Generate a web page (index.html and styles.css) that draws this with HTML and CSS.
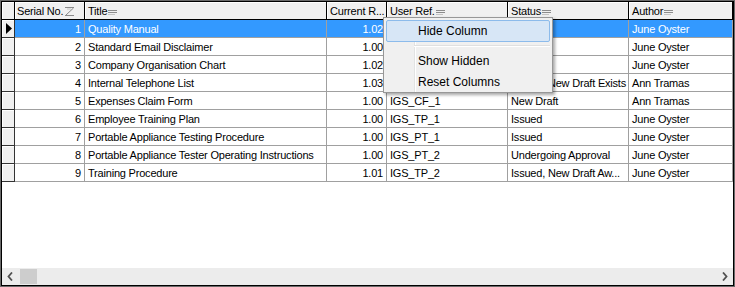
FILE: index.html
```html
<!DOCTYPE html>
<html>
<head>
<meta charset="utf-8">
<link rel="stylesheet" href="styles.css">
</head>
<body>
<div class="frame">
  <table class="grid">
    <colgroup>
      <col class="c-rh"><col class="c-sn"><col class="c-title"><col class="c-rev"><col class="c-ref"><col class="c-status"><col class="c-author">
    </colgroup>
    <thead>
      <tr>
        <th class="corner"></th>
        <th>Serial No.<svg class="ico" width="11" height="9" viewBox="0 0 11 9"><path d="M1 0.5H10M9.5 1L2 8M1 8.5H10" stroke="#8a8a8a" stroke-width="1" fill="none"/><path d="M3 2H7" stroke="#c8c8c8" stroke-width="1"/></svg></th>
        <th>Title<svg class="ico" width="10" height="7" viewBox="0 0 10 7"><path d="M0 1.5H9M0 3.5H9" stroke="#8c8c8c"/><path d="M0 5.5H7" stroke="#c4c4c4"/></svg></th>
        <th>Current R...</th>
        <th>User Ref.<svg class="ico" width="10" height="7" viewBox="0 0 10 7"><path d="M0 1.5H9M0 3.5H9" stroke="#8c8c8c"/><path d="M0 5.5H7" stroke="#c4c4c4"/></svg></th>
        <th>Status<svg class="ico" width="10" height="7" viewBox="0 0 10 7"><path d="M0 1.5H9M0 3.5H9" stroke="#8c8c8c"/><path d="M0 5.5H7" stroke="#c4c4c4"/></svg></th>
        <th>Author<svg class="ico" width="10" height="7" viewBox="0 0 10 7"><path d="M0 1.5H9M0 3.5H9" stroke="#8c8c8c"/><path d="M0 5.5H7" stroke="#c4c4c4"/></svg></th>
      </tr>
    </thead>
    <tbody>
      <tr class="sel">
        <td class="rh"><svg width="7" height="11" viewBox="0 0 7 11"><path d="M0 0L6 5.5L0 11Z" fill="#000"/></svg></td>
        <td class="num">1</td><td>Quality Manual</td><td class="num">1.02</td><td>IGS_QM_1</td><td>Issued</td><td>June Oyster</td>
      </tr>
      <tr>
        <td class="rh"></td>
        <td class="num">2</td><td>Standard Email Disclaimer</td><td class="num">1.00</td><td>IGS_SE_1</td><td>Issued</td><td>June Oyster</td>
      </tr>
      <tr>
        <td class="rh"></td>
        <td class="num">3</td><td>Company Organisation Chart</td><td class="num">1.02</td><td>IGS_CO_1</td><td>Issued</td><td>June Oyster</td>
      </tr>
      <tr>
        <td class="rh"></td>
        <td class="num">4</td><td>Internal Telephone List</td><td class="num">1.03</td><td>IGS_IT_1</td><td>Issued, New Draft Exists</td><td>Ann Tramas</td>
      </tr>
      <tr>
        <td class="rh"></td>
        <td class="num">5</td><td>Expenses Claim Form</td><td class="num">1.00</td><td>IGS_CF_1</td><td>New Draft</td><td>Ann Tramas</td>
      </tr>
      <tr>
        <td class="rh"></td>
        <td class="num">6</td><td>Employee Training Plan</td><td class="num">1.00</td><td>IGS_TP_1</td><td>Issued</td><td>June Oyster</td>
      </tr>
      <tr>
        <td class="rh"></td>
        <td class="num">7</td><td>Portable Appliance Testing Procedure</td><td class="num">1.00</td><td>IGS_PT_1</td><td>Issued</td><td>June Oyster</td>
      </tr>
      <tr>
        <td class="rh"></td>
        <td class="num">8</td><td>Portable Appliance Tester Operating Instructions</td><td class="num">1.00</td><td>IGS_PT_2</td><td>Undergoing Approval</td><td>June Oyster</td>
      </tr>
      <tr>
        <td class="rh"></td>
        <td class="num">9</td><td>Training Procedure</td><td class="num">1.01</td><td>IGS_TP_2</td><td>Issued, New Draft Aw...</td><td>June Oyster</td>
      </tr>
    </tbody>
  </table>
  <div class="filler"></div>
  <div class="hscroll">
    <div class="sbtn"><svg width="7" height="9" viewBox="0 0 7 9"><path d="M5 0.5L1.5 4.5L5 8.5" stroke="#505050" stroke-width="1.8" fill="none"/></svg></div>
    <div class="thumb"></div>
    <div class="track"></div>
    <div class="sbtn"><svg width="7" height="9" viewBox="0 0 7 9"><path d="M2 0.5L5.5 4.5L2 8.5" stroke="#505050" stroke-width="1.8" fill="none"/></svg></div>
  </div>

  <div class="menu">
    <div class="mitem hot">Hide Column</div>
    <div class="msep"></div>
    <div class="mitem">Show Hidden</div>
    <div class="mitem">Reset Columns</div>
  </div>
</div>
</body>
</html>
```

FILE: styles.css
```css
html, body {
  margin: 0;
  padding: 0;
  background: #ffffff;
}

.frame {
  position: relative;
  width: 735px;
  height: 287px;
  box-sizing: border-box;
  border: 1px solid #6a6a6a;
  box-shadow: inset 1px 1px 0 #000, inset -1px -1px 0 #000;
  padding: 1px;
  display: flex;
  flex-direction: column;
  background: #fff;
  font-family: "Liberation Sans", Arial, sans-serif;
  font-size: 11px;
  letter-spacing: -0.2px;
  color: #000;
}

.grid {
  table-layout: fixed;
  border-collapse: separate;
  border-spacing: 0;
  width: 731px;
  flex: none;
}

.c-rh { width: 13px; }
.c-sn { width: 70px; }
.c-title { width: 242px; }
.c-rev { width: 60px; }
.c-ref { width: 121px; }
.c-status { width: 121px; }
.c-author { width: 104px; }

.grid th {
  height: 16px;
  padding: 1px 0 0 3px;
  background: #f0f0f0;
  border-right: 1px solid #000;
  border-bottom: 1px solid #000;
  box-shadow: inset 1px 1px 0 #fff;
  font-weight: normal;
  text-align: left;
  white-space: nowrap;
  overflow: hidden;
  line-height: 16px;
}

.grid th:nth-child(2) { padding-left: 2px; }

.grid th.corner {
  padding: 0;
}

.ico {
  margin-left: 1px;
  vertical-align: -1px;
}

.grid td {
  height: 16px;
  padding: 1px 3px 0 3px;
  border-right: 1px solid #a0a0a0;
  border-bottom: 1px solid #a0a0a0;
  white-space: nowrap;
  overflow: hidden;
  line-height: 16px;
}

.grid td.num {
  text-align: right;
}

.grid td.rh {
  padding: 0;
  height: 17px;
  background: #f0f0f0;
  border-right: 1px solid #333;
  border-bottom: 1px solid #333;
  box-shadow: inset 1px 1px 0 #fff;
  text-align: left;
}

.grid td.rh svg {
  display: block;
  margin: 0 0 0 4px;
}

.grid tr.sel td:not(.rh) {
  background: #3399ff;
  color: #fff;
}

.filler {
  flex: 1;
}

.hscroll {
  flex: none;
  height: 17px;
  display: flex;
  background: #ececec;
}

.sbtn {
  width: 17px;
  display: flex;
  align-items: center;
  justify-content: center;
}

.thumb {
  width: 17px;
  margin: 1px 0 1px 1px;
  background: #cdcdcd;
}

.track {
  flex: 1;
}

.menu {
  position: absolute;
  left: 382px;
  top: 16px;
  width: 170px;
  box-sizing: border-box;
  padding: 2px 2px 0 2px;
  background: #f0f0f0;
  border: 1px solid #979797;
  box-shadow: 2px 2px 3px rgba(0, 0, 0, 0.35);
  font-family: "Liberation Sans", Arial, sans-serif;
  font-size: 12px;
  letter-spacing: 0;
}

.menu::before {
  content: "";
  position: absolute;
  left: 30px;
  top: 2px;
  bottom: 0;
  width: 1px;
  background: #e2e3e3;
  box-shadow: 1px 0 0 #fff;
}

.mitem {
  position: relative;
  height: 21px;
  line-height: 21px;
  padding-left: 31px;
  border: 1px solid transparent;
  border-radius: 2px;
  box-sizing: border-box;
}

.mitem.hot {
  height: 22px;
  line-height: 20px;
  background: #d7e6f6;
  border-color: #8cbbeb;
}

.msep {
  position: relative;
  height: 8px;
  margin-left: 28px;
}

.msep::after {
  content: "";
  position: absolute;
  left: 0;
  right: 0;
  top: 3px;
  height: 1px;
  background: #e0e0e0;
  box-shadow: 0 1px 0 #fff;
}
```
